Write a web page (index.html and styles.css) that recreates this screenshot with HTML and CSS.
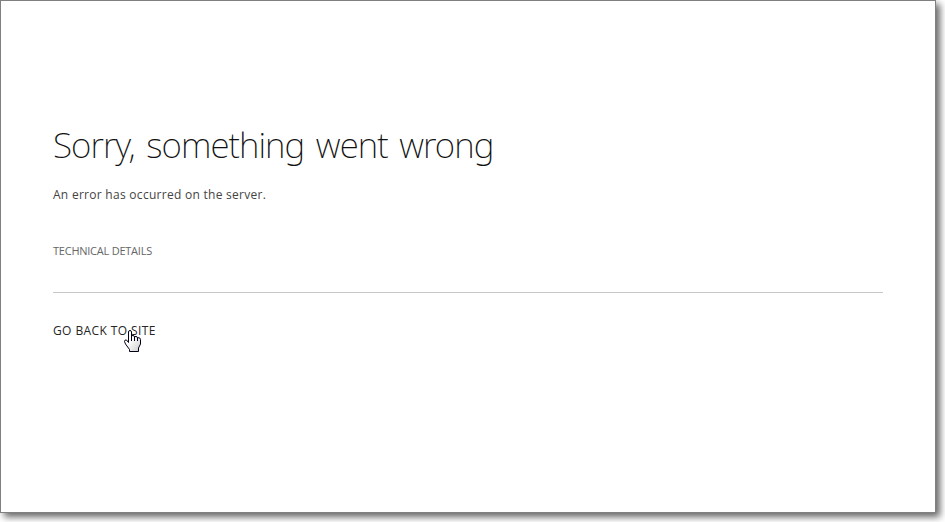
FILE: index.html
```
<!DOCTYPE html>
<html lang="en">
<head>
  <meta charset="UTF-8">
  <title>Error</title>
  <link rel="stylesheet" href="styles.css">
</head>
<body>
  <div id="page">
    <h1>Sorry, something went wrong</h1>
    <p class="message">An error has occurred on the server.</p>
    <div class="details">TECHNICAL DETAILS</div>
    <div class="back">
      <a href="#">GO BACK TO SITE</a>
      <svg class="cursor" width="17" height="22" viewBox="0 0 17 22">
        <defs>
          <linearGradient id="hand" x1="0" y1="0" x2="1" y2="1">
            <stop offset="0.4" stop-color="#fff"/>
            <stop offset="1" stop-color="#ccc"/>
          </linearGradient>
        </defs>
        <path d="M4.5 12.5V2Q4.5 .5 6 .5T7.5 2V6.5Q7.5 5.5 9 5.5T10.500 7Q10.500 6.500 12 6.500T13.500 8Q13.500 7.500 15 7.800T16.500 9.500V14L14.500 18V21.500H5.500V19.500L1.500 14L.5 11.500Q.5 9.500 2.500 10Z" fill="url(#hand)" stroke="#000014"/>
        <path d="M7.500 6V11M10.500 7V11M13.500 8V11" fill="none" stroke="#000014"/>
      </svg>
    </div>
  </div>
</body>
</html>
```
FILE: styles.css
```
body {
  margin: 0;
  height: 522px;
  background: #fff;
  font-family: "Open Sans", "Noto Sans", sans-serif;
  overflow: hidden;
}
#page {
  box-sizing: border-box;
  width: 936px;
  height: 513px;
  padding: 118px 52px 0;
  border: 1px solid #808080;
  background: #fff;
  box-shadow: 4px 4px 7px rgba(0, 0, 0, 0.6);
}
h1 {
  margin: 0;
  font-family: "Noto Sans", "Open Sans", sans-serif;
  font-size: 35px;
  font-weight: 200;
  line-height: 52px;
  letter-spacing: -0.95px;
  word-spacing: 3.5px;
  color: #111;
  white-space: nowrap;
}
.message {
  margin: 14px 0 0;
  font-size: 12px;
  line-height: 20px;
  letter-spacing: 0.28px;
  color: #444;
}
.details {
  height: 51px;
  margin-top: 36px;
  border-bottom: 1px solid #c6c6c6;
  font-size: 11px;
  line-height: 20px;
  letter-spacing: -0.24px;
  color: #666;
}
.back {
  position: relative;
  margin-top: 28px;
  font-size: 12px;
  line-height: 20px;
  letter-spacing: 0.4px;
}
.back a {
  color: #262626;
  text-decoration: none;
}
.cursor {
  position: absolute;
  left: 71px;
  top: 9px;
}
```
